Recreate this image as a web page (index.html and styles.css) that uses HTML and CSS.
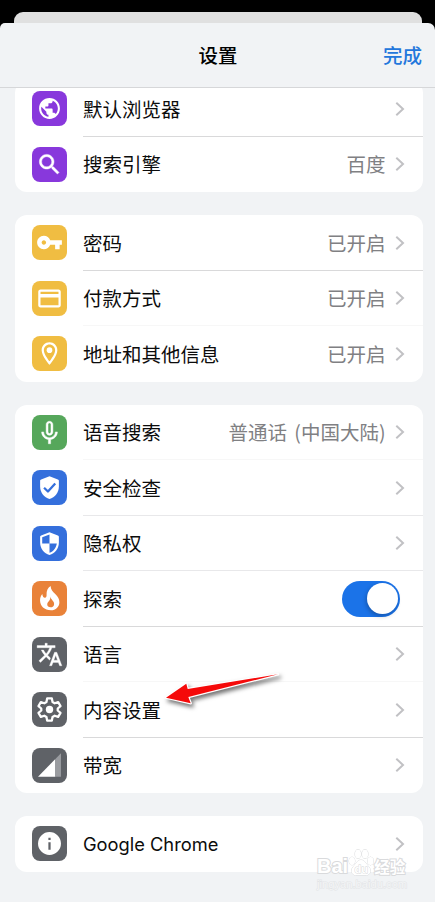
FILE: index.html
```html
<!DOCTYPE html>
<html lang="zh-CN">
<head>
    <meta charset="UTF-8">
    <meta name="viewport" content="width=device-width, initial-scale=1.0">
    <title>设置</title>
    <link rel="stylesheet" href="styles.css">
</head>
<body>
    <svg class="defs">
        <symbol id="chevron" viewBox="0 0 10 16"><path d="M1.3 1.8L8 8l-6.7 6.2" fill="none" stroke="#c1c1c4" stroke-width="2"/></symbol>
    </svg>

    <div class="back-sheet"></div>
    <div class="sheet">
        <header class="nav">
            <span></span>
            <h1>设置</h1>
            <a class="done">完成</a>
        </header>

        <main class="content">
            <section class="card">
                <div class="row">
                    <span class="icon purple"><svg class="small" viewBox="0 0 24 24"><path d="M12 2C6.480 2 2 6.480 2 12s4.480 10 10 10 10-4.480 10-10S17.520 2 12 2zm-1 17.930c-3.950-.490-7-3.850-7-7.930 0-.620.080-1.210.210-1.790L9 15v1c0 1.100.900 2 2 2v1.930zm6.900-2.540c-.260-.810-1-1.390-1.900-1.390h-1v-3c0-.550-.450-1-1-1H8v-2h2c.550 0 1-.450 1-1V7h2c1.100 0 2-.900 2-2v-.410c2.930 1.190 5 4.060 5 7.410 0 2.080-.800 3.970-2.100 5.390z"/></svg></span>
                    <div class="cell"><span class="label">默认浏览器</span><svg class="chevron"><use href="#chevron"/></svg></div>
                </div>
                <div class="row">
                    <span class="icon purple"><svg viewBox="0 0 24 24"><path d="M15.500 14h-.790l-.280-.270C15.410 12.590 16 11.110 16 9.500 16 5.910 13.090 3 9.500 3S3 5.910 3 9.500 5.910 16 9.500 16c1.610 0 3.090-.590 4.230-1.570l.270.280v.790l5 4.990L20.490 19l-4.990-5zm-6 0C7.010 14 5 11.990 5 9.500S7.010 5 9.500 5 14 7.010 14 9.500 11.990 14 9.500 14z" stroke="#fff" stroke-width=".4"/></svg></span>
                    <div class="cell"><span class="label">搜索引擎</span><span class="value">百度</span><svg class="chevron"><use href="#chevron"/></svg></div>
                </div>
            </section>

            <section class="card">
                <div class="row">
                    <span class="icon yellow"><svg viewBox="0 0 24 24"><path d="M12.650 10C11.830 7.670 9.610 6 7 6c-3.310 0-6 2.690-6 6s2.690 6 6 6c2.610 0 4.830-1.670 5.650-4H17v4h4v-4h2v-4H12.650zM7 14c-1.100 0-2-.900-2-2s.900-2 2-2 2 .900 2 2-.900 2-2 2z"/></svg></span>
                    <div class="cell"><span class="label">密码</span><span class="value">已开启</span><svg class="chevron"><use href="#chevron"/></svg></div>
                </div>
                <div class="row faint">
                    <span class="icon yellow"><svg viewBox="0 0 24 24"><path d="M20 4H4c-1.110 0-1.990.890-1.990 2L2 18c0 1.110.890 2 2 2h16c1.110 0 2-.890 2-2V6c0-1.110-.890-2-2-2zm0 14H4v-7h16v7zm0-10H4V6h16v2z"/></svg></span>
                    <div class="cell"><span class="label">付款方式</span><span class="value">已开启</span><svg class="chevron"><use href="#chevron"/></svg></div>
                </div>
                <div class="row">
                    <span class="icon yellow"><svg viewBox="0 0 24 24"><path d="M12 2C8.130 2 5 5.130 5 9c0 5.250 7 13 7 13s7-7.750 7-13c0-3.870-3.130-7-7-7zM7 9c0-2.760 2.240-5 5-5s5 2.240 5 5c0 2.880-2.880 7.190-5 9.880C9.920 16.210 7 11.850 7 9z"/><circle cx="12" cy="9" r="2.500"/></svg></span>
                    <div class="cell"><span class="label">地址和其他信息</span><span class="value">已开启</span><svg class="chevron"><use href="#chevron"/></svg></div>
                </div>
            </section>

            <section class="card">
                <div class="row faint">
                    <span class="icon green"><svg viewBox="0 0 24 24"><path d="M12 14.500c1.660 0 3-1.340 3-3V5c0-1.660-1.340-3-3-3S9 3.340 9 5v6.500c0 1.660 1.340 3 3 3zm-1.300-9.600c0-.700.600-1.300 1.300-1.300s1.300.600 1.300 1.300v6.700c0 .700-.600 1.300-1.300 1.300s-1.300-.600-1.300-1.300V4.900zm6.500 6.600c0 3-2.440 5.100-5.200 5.100s-5.200-2.100-5.200-5.100H5c0 3.410 2.720 6.230 6 6.720V22h2v-3.780c3.280-.480 6-3.300 6-6.720h-1.800z" stroke="#fff" stroke-width=".4"/></svg></span>
                    <div class="cell"><span class="label">语音搜索</span><span class="value wide">普通话 (中国大陆)</span><svg class="chevron"><use href="#chevron"/></svg></div>
                </div>
                <div class="row light">
                    <span class="icon blue"><svg class="small" viewBox="0 0 24 24"><path d="M12 1.200L4 4.200Q3 4.600 3 5.600V11c0 5.550 3.840 10.740 9 12 5.160-1.260 9-6.450 9-12V5.600Q21 4.600 20 4.200z"/><path class="line blue-line" d="M6.800 12.200l3.700 3.600 7-7.600"/></svg></span>
                    <div class="cell"><span class="label">安全检查</span><svg class="chevron"><use href="#chevron"/></svg></div>
                </div>
                <div class="row light">
                    <span class="icon blue"><svg class="small" viewBox="0 0 24 24"><path d="M12 1.200L4 4.200Q3 4.600 3 5.600V11c0 5.550 3.840 10.740 9 12 5.160-1.260 9-6.450 9-12V5.600Q21 4.600 20 4.200zm0 10.790h7c-.530 4.120-3.280 7.790-7 8.940V12H5V6l7-2.700z"/></svg></span>
                    <div class="cell"><span class="label">隐私权</span><svg class="chevron"><use href="#chevron"/></svg></div>
                </div>
                <div class="row">
                    <span class="icon orange"><svg viewBox="0 0 24 24"><path d="M13 .8c.2 3.200 1.800 4.900 4.100 7.300 2.500 2.600 3.700 4.600 3.700 7.200 0 4.100-3.300 7.200-7.500 7.200C7.500 22.500 3.600 18.700 3.600 13.600c0-2.400.8-4.200 2-5.500.2 2 1 3.300 2.300 3.300 1.300 0 1.600-1.200 1.500-2.900C9.200 5.100 10.500 2.500 13 .8zM12.600 10.300c.3 1.900-.2 3-1.200 4.200-.9 1-1.400 1.700-1.400 2.800 0 1.500 1.200 2.500 2.900 2.500 1.800 0 3.200-1.200 3.200-3 0-2.500-2.600-3.400-3.500-6.500z"/></svg></span>
                    <div class="cell"><span class="label">探索</span><span class="toggle"></span></div>
                </div>
                <div class="row faint">
                    <span class="icon gray"><svg viewBox="0 0 24 24"><path d="M12.870 15.070l-2.540-2.510.030-.030c1.740-1.940 2.980-4.170 3.710-6.530H17V4h-7V2H8v2H1v1.990h11.170C11.500 7.920 10.440 9.750 9 11.350 8.070 10.320 7.300 9.190 6.690 8h-2c.730 1.630 1.730 3.170 2.980 4.560l-5.090 5.020L4 19l5-5 3.110 3.110.760-2.040zM18.500 10h-2L12 22h2l1.120-3h4.750L21 22h2l-4.500-12zm-2.620 7l1.620-4.330L19.120 17h-3.240z" stroke="#fff" stroke-width=".3"/></svg></span>
                    <div class="cell"><span class="label">语言</span><svg class="chevron"><use href="#chevron"/></svg></div>
                </div>
                <div class="row">
                    <span class="icon gray"><svg viewBox="0 0 24 24"><path class="line" d="M9.900 2.200h4.200l.6 3.200 1.900 1.100 3.100-1.100 2.100 3.600-2.500 2.100v1.800l2.500 2.100-2.100 3.600-3.100-1.100-1.900 1.100-.6 3.200H9.900l-.6-3.200-1.900-1.100-3.100 1.100L2.200 15l2.500-2.100v-1.800L2.200 9l2.100-3.600 3.100 1.100 1.900-1.100z"/><circle cx="12" cy="12" r="3.300"/></svg></span>
                    <div class="cell"><span class="label">内容设置</span><svg class="chevron"><use href="#chevron"/></svg></div>
                </div>
                <div class="row">
                    <span class="icon gray"><svg viewBox="0 0 24 24"><path d="M1.800 22L17.200 6.200V22z"/><path class="dim" d="M17.200 6.200L22.200 1.200V22h-5z"/></svg></span>
                    <div class="cell"><span class="label">带宽</span><svg class="chevron"><use href="#chevron"/></svg></div>
                </div>
            </section>

            <section class="card">
                <div class="row">
                    <span class="icon gray"><svg viewBox="0 0 24 24"><path fill-rule="evenodd" d="M12 1.800a10.200 10.200 0 1 0 0 20.400a10.200 10.200 0 1 0 0-20.400zM11 6.800h2v2.100h-2zM11 10.800h2v6.700h-2z"/></svg></span>
                    <div class="cell"><span class="label latin">Google Chrome</span><svg class="chevron"><use href="#chevron"/></svg></div>
                </div>
            </section>
        </main>
    </div>

    <!-- arrow pointing at content settings -->
    <svg class="arrow" viewBox="0 0 130 50">
        <path d="M6 27.700L26.300 13.800 27.700 19 118 4.300 28.300 27 30.700 33.300z"/>
    </svg>

    <!-- watermark -->
    <div class="watermark">
        <div class="brand">
            <span>Bai</span>
            <svg viewBox="0 0 26 28">
                <ellipse cx="4" cy="12" rx="3" ry="4"/>
                <ellipse cx="10" cy="5" rx="3" ry="4.300"/>
                <ellipse cx="17" cy="5" rx="3" ry="4.300"/>
                <ellipse cx="22.500" cy="12" rx="3" ry="4"/>
                <path d="M13 11c-4 0-5 4-8 7-3 4-1 9 4 8h8c5 1 7-4 4-8-3-3-4-7-8-7z"/>
                <text x="6.500" y="23.500">du</text>
            </svg>
            <span class="cn">经验</span>
        </div>
        <div class="url">jingyan.baidu.com</div>
    </div>
</body>
</html>
```
FILE: styles.css
```css
* { box-sizing: border-box; }
body {
    margin: 0;
    width: 435px;
    height: 902px;
    padding-top: 12px;
    overflow: hidden;
    position: relative;
    background: #000;
    color: #0c0c0c;
    font-family: "Noto Sans CJK SC", sans-serif;
    font-size: 19.5px;
}
.defs { position: absolute; width: 0; height: 0; }
.back-sheet { height: 11px; margin: 0 13px 0 14px; border-radius: 9px 9px 0 0; background: #e0e0e0; }
.sheet { height: 879px; display: flex; flex-direction: column; overflow: hidden; border-radius: 5px 7px 0 0; background: #f1f3f5; }

.nav {
    flex: none;
    height: 65px;
    padding: 0 13px 2px 14px;
    display: grid;
    grid-template-columns: 1fr auto 1fr;
    align-items: center;
    border-bottom: 1px solid #d6d7d9;
}
.nav h1 { margin: 0; font-size: 19.4px; font-weight: 500; color: #000; }
.done { justify-self: end; color: #2377dc; font-weight: 500; }

/* list is scrolled, so the first row sits partly under the bar */
.content { flex: 1; min-height: 0; overflow: hidden; padding: 0 12.5px 0 14.5px; display: flex; flex-direction: column; gap: 23px; }
.card { flex: none; background: #fff; border-radius: 12px; }
.card:first-child { margin-top: -7px; }

.row { height: 55.5px; padding-left: 17.7px; display: flex; align-items: center; gap: 15.8px; }
.cell { flex: 1; height: 100%; padding-right: 18px; display: flex; align-items: center; border-bottom: 1px solid #d9d9da; }
.faint .cell { border-color: #f7f7f7; }
.light .cell { border-color: #e8e8ea; }
.row:last-child .cell { border-color: transparent; }
.label { flex: 1; }
.latin { font-family: Inter, sans-serif; font-size: 18.3px; padding-top: 2px; }
.value { color: #808083; margin-right: 9px; }
.wide { word-spacing: 3px; }
.chevron { width: 10px; height: 16px; margin-top: 1px; }

.icon { flex: none; width: 35px; height: 35px; border-radius: 8px; display: flex; align-items: center; justify-content: center; }
.icon svg { width: 27px; height: 27px; fill: #fff; }
.icon .small { width: 25px; height: 25px; }
.icon .line { fill: none; stroke: #fff; stroke-width: 2; stroke-linejoin: round; }
.icon .blue-line { stroke: #346fdc; stroke-width: 2.2; }
.icon .dim { fill: #9a9ca0; }
.purple { background: #8838dc; }
.yellow { background: #f0bd42; }
.green { background: #56a75b; }
.blue { background: #346fdc; }
.orange { background: #e98239; }
.gray { background: #5f6267; }

.toggle { width: 58px; height: 36px; padding: 2px; margin: 1px 5px 0 0; border-radius: 18px; background: #1b73e8; display: flex; align-items: center; justify-content: flex-end; }
.toggle::after { content: ""; width: 31px; height: 31px; border-radius: 50%; background: #fff; box-shadow: -1px 2px 4px rgba(0, 0, 0, .25); }

.arrow { position: absolute; left: 160px; top: 670px; width: 130px; height: 50px; filter: drop-shadow(2px 3px 2px rgba(0, 0, 0, .55)); }
.arrow path { fill: #f50a0a; stroke: #fff; stroke-width: 2.4; stroke-linejoin: round; paint-order: stroke; }

.watermark { position: absolute; left: 317px; top: 846px; width: 92px; font-family: "Liberation Sans", sans-serif; color: #fff; paint-order: stroke; -webkit-text-stroke: 2px #d9dadc; }
.brand { display: flex; align-items: flex-end; height: 31px; font-size: 20px; line-height: 22px; font-weight: bold; }
.brand svg { flex: none; width: 26px; height: 28px; fill: #fff; stroke: #d6d7d9; stroke-width: .9; }
.brand text { font-size: 11px; font-weight: bold; -webkit-text-stroke: 0; }
.brand .cn { font-family: "Noto Sans CJK SC", sans-serif; font-size: 15.5px; }
.url { font-size: 11.2px; line-height: 14px; color: #f4f5f6; -webkit-text-stroke: 1px #e2e4e6; }
```
